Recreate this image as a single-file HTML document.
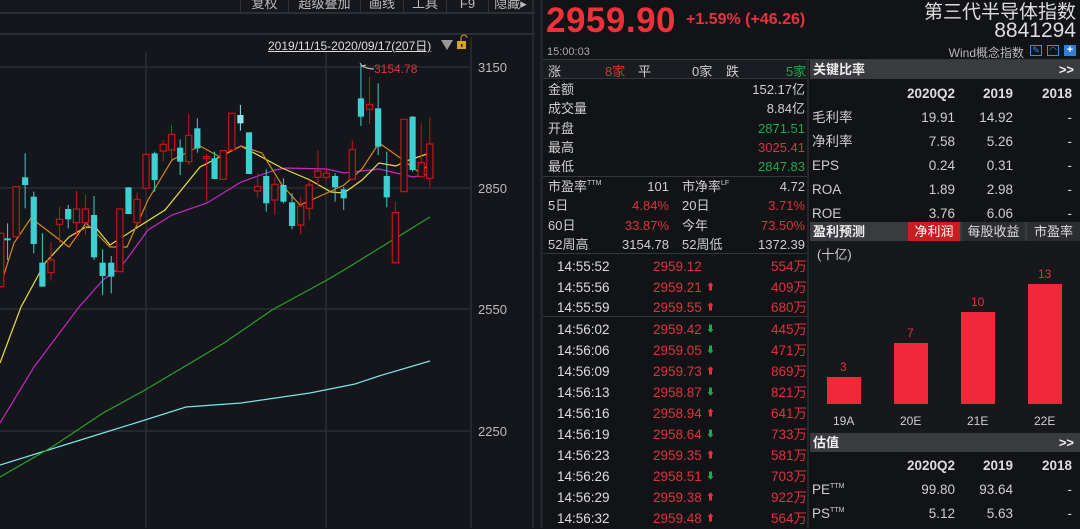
<!DOCTYPE html>
<html><head><meta charset="utf-8"><style>
*{margin:0;padding:0;box-sizing:border-box}
body{width:1080px;height:528px;background:#14161b;overflow:hidden;position:relative;font-family:"Liberation Sans","Noto Sans CJK SC",sans-serif;color:#cfcfcf;font-size:13px}
.a{position:absolute;white-space:nowrap}
.r{color:#e0323c}.g{color:#22a64c}
.R{text-align:right}
sup{line-height:0;font-size:7px;vertical-align:6px}
.hd{position:absolute;background:#3a3b3f;color:#eee;font-weight:bold;font-size:13px;height:19px;line-height:19px}
.tk{position:absolute;left:543px;width:264px;height:21px;line-height:21px;font-size:13.5px}
.tk .t{position:absolute;left:14px;color:#ddd}
.tk .p{position:absolute;left:110px;color:#e0323c}
.tk .ar{position:absolute;left:163px;font-size:9px;line-height:21px}
.tk .v{position:absolute;right:0;color:#e0323c}
.tb div{height:24px;line-height:24px}
.tb span{display:inline-block;text-align:right}
.tb span:first-child{width:60px;text-align:left}
.tb span:nth-child(2){width:83px}.tb span:nth-child(3){width:58px}.tb span:nth-child(4){width:59px}
</style></head><body>
<div class="a" style="left:0;top:0;width:535px;height:14px;background:#16181d;border-bottom:2px solid #2c2e33"></div>
<div class="a" style="left:0;top:33px;width:535px;height:2px;background:#2c2e33"></div>
<div class="a" style="top:-4px;left:240px;font-size:13px;color:#bbb;line-height:16px">
<span style="display:inline-block;width:48px;text-align:center;border-left:1px solid #333">复权</span><span style="display:inline-block;width:72px;text-align:center;border-left:1px solid #333">超级叠加</span><span style="display:inline-block;width:43px;text-align:center;border-left:1px solid #333">画线</span><span style="display:inline-block;width:43px;text-align:center;border-left:1px solid #333">工具</span><span style="display:inline-block;width:42px;text-align:center;border-left:1px solid #333">F9</span><span style="display:inline-block;width:44px;text-align:center;border-left:1px solid #333">隐藏▸</span></div>
<div class="a" style="left:268px;top:37px;font-size:12px;color:#ddd;text-decoration:underline">2019/11/15-2020/09/17(207日)</div>
<svg class="a" style="left:0;top:0" width="540" height="528">
<polygon points="441,40 453,40 447,50" fill="#999"/>
<rect x="457" y="41" width="9" height="8" fill="#d9a521"/><path d="M461,41 v-3 a3,3 0 0 1 6,0" stroke="#d9a521" fill="none"/><rect x="461" y="44" width="1.5" height="3" fill="#222"/>
<g stroke="#2b2d32" stroke-width="1.5">
<line x1="0" y1="67" x2="471" y2="67"/><line x1="0" y1="188" x2="471" y2="188"/><line x1="0" y1="309" x2="471" y2="309"/><line x1="0" y1="431" x2="471" y2="431"/>
<line x1="146" y1="52" x2="146" y2="528"/><line x1="326" y1="52" x2="326" y2="528"/>
<line x1="471" y1="37" x2="471" y2="528"/><line x1="533" y1="0" x2="533" y2="528"/>
</g>
<g fill="#bbb" font-size="13" font-family="Liberation Sans">
<text x="478" y="72">3150</text><text x="478" y="193">2850</text><text x="478" y="314">2550</text><text x="478" y="436">2250</text></g>
<g fill="none" stroke-width="1.2">
<polyline stroke="#7fe3e6" points="0,465 103,433 145,420 186,407 241,403 310,393 355,384 379,376 430,361"/>
<polyline stroke="#2aa12a" points="0,477 52,447 103,413 145,390 224,343 272,310 327,280 344,270 430,217"/>
<polyline stroke="#c628c6" points="0,423 34,367 79,307 103,280 121,267 148,230 172,215 207,203 241,182 275,170 286,168 327,169 344,173 379,169 396,173 413,177 430,174"/>
<polyline stroke="#e8e040" points="0,363 21,307 45,263 69,237 86,227 96,228 110,245 138,227 165,210 200,167 241,146 282,168 310,180 331,192 344,193 362,180 379,163 396,166 406,161 430,153"/>
<polyline stroke="#d08a20" points="0,287 14,243 31,218 69,247 86,223 110,247 127,247 148,200 172,160 200,146 220,157 241,146 262,153 282,185 300,205 327,193 344,185 362,169 379,143 399,157 420,173 430,163"/>
</g>
<g id="c" transform="translate(0,90) scale(0.3444,0.3333)"></g>
<path d="M362,66 l-2,-3 M362,66 l4,-1 M362,66 q6,3 12,3" stroke="#ccc" fill="none"/>
<text x="374" y="73" fill="#e0323c" font-size="12" font-family="Liberation Sans">3154.78</text>
</svg>
<script>
var d=[["r",2,430,590,430,590],["c",22,445,448,400,510],["r",47,290,440,288,440],["c",73,262,285,190,355],["c",98,320,462,305,490],["c",123,518,590,430,590],["r",148,510,548,458,572],["r",173,388,403,350,460],["c",198,357,388,345,415],["r",222,357,398,302,440],["r",248,357,398,315,435],["c",273,375,502,318,510],["c",298,518,558,478,615],["c",323,518,560,498,610],["r",348,357,545,357,545],["c",373,292,372,292,372],["r",398,328,398,308,405],["r",424,193,295,193,295],["c",449,190,270,185,305],["r",474,163,183,150,215],["r",498,133,180,105,210],["c",523,173,215,148,255],["r",548,136,215,72,225],["c",573,115,175,85,188],["r",600,200,205,192,335],["c",623,205,267,185,268],["r",648,182,268,180,268],["l",698,75,100,45,122],["r",673,70,180,68,180],["c",723,127,252,127,252],["r",748,290,303,250,322],["c",773,258,340,238,365],["r",798,283,330,262,375],["c",823,285,335,265,340],["c",848,337,408,310,418],["r",873,348,405,320,432],["r",898,285,355,270,390],["r",923,243,262,182,290],["r",948,250,262,240,268],["c",973,258,292,250,335],["c",998,298,325,290,360],["r",1023,178,268,152,270],["c",1048,25,80,-75,108],["r",1073,43,58,-40,102],["c",1098,55,170,-20,195],["c",1123,258,322,185,352],["r",1148,368,518,335,520],["r",1173,88,305,88,305],["c",1198,80,240,78,245],["r",1223,218,260,100,262],["r",1248,162,265,82,292]];
var s="";d.forEach(function(k){var col=k[0]=="r"?"#c01818":(k[0]=="l"?"#8ee8ea":"#3ecfd0");
s+='<line x1="'+k[1]+'" x2="'+k[1]+'" y1="'+k[4]+'" y2="'+k[5]+'" stroke="'+col+'" vector-effect="non-scaling-stroke" stroke-width="1"/>';
if(k[0]=="r")s+='<rect x="'+(k[1]-9)+'" y="'+k[2]+'" width="18" height="'+Math.max(k[3]-k[2],6)+'" fill="#14161b" stroke="'+col+'" vector-effect="non-scaling-stroke" stroke-width="1.2"/>';
else s+='<rect x="'+(k[1]-9)+'" y="'+k[2]+'" width="18" height="'+Math.max(k[3]-k[2],6)+'" fill="'+col+'"/>';});
document.getElementById("c").innerHTML=s;
</script>
<div class="a" style="left:540px;top:0;width:540px;height:528px;background:#111317;border-left:3px solid #22242a"></div>
<div class="a r" style="left:546px;top:1px;font-size:35px;font-weight:bold;color:#f0303a;letter-spacing:0.5px">2959.90</div>
<div class="a r" style="left:686px;top:11px;font-size:16px;font-weight:bold;color:#e8323c">+1.59% (+46.26)</div>
<div class="a" style="left:547px;top:46px;font-size:11px;color:#aaa">15:00:03</div>
<div class="a" style="right:4px;top:-3px;font-size:19px;color:#ddd">第三代半导体指数</div>
<div class="a" style="right:4px;top:19px;font-size:21px;color:#ddd">8841294</div>
<div class="a" style="right:56px;top:44px;font-size:12px;color:#bbb">Wind概念指数</div>
<div class="a" style="left:1030px;top:45px;width:12px;height:11px;border:1px solid #3a8ee6;color:#3a8ee6;font-size:9px;line-height:9px;text-align:center">✎</div>
<div class="a" style="left:1047px;top:45px;width:12px;height:11px;border:1px solid #3a8ee6;color:#3a8ee6;font-size:9px;line-height:9px;text-align:center">◠</div>
<div class="a" style="left:1064px;top:45px;width:12px;height:11px;background:#2f7fe0;color:#fff;font-size:11px;line-height:11px;text-align:center;font-weight:bold">+</div>
<div class="a" style="left:543px;top:59px;width:537px;height:1px;background:#34363c"></div>
<div class="a" style="left:543px;top:60px;width:264px;height:19px;background:#1a1c21;border-bottom:1px solid #34363c"></div>
<div class="a" style="left:548px;top:61px">涨</div><div class="a r" style="left:605px;top:61px">8家</div><div class="a" style="left:638px;top:61px">平</div><div class="a" style="left:692px;top:61px">0家</div><div class="a" style="left:726px;top:61px">跌</div><div class="a g" style="left:786px;top:61px">5家</div>
<div class="a" style="left:548px;top:80px;line-height:19.3px">金额<br>成交量<br>开盘<br>最高<br>最低</div>
<div class="a R" style="right:275px;top:80px;line-height:19.3px">152.17亿<br>8.84亿<br><span class="g">2871.51</span><br><span class="r">3025.41</span><br><span class="g">2847.83</span></div>
<div class="a" style="left:543px;top:176px;width:264px;height:1px;background:#34363c"></div>
<div class="a" style="left:548px;top:177px;line-height:19.3px">市盈率<sup>TTM</sup><br>5日<br>60日<br>52周高</div>
<div class="a R" style="right:411px;top:177px;line-height:19.3px">101<br><span class="r">4.84%</span><br><span class="r">33.87%</span><br>3154.78</div>
<div class="a" style="left:682px;top:177px;line-height:19.3px">市净率<sup>LF</sup><br>20日<br>今年<br>52周低</div>
<div class="a R" style="right:275px;top:177px;line-height:19.3px">4.72<br><span class="r">3.71%</span><br><span class="r">73.50%</span><br>1372.39</div>
<div class="a" style="left:543px;top:253px;width:264px;height:1px;background:#34363c"></div>
<div class="a" style="left:543px;top:316px;width:264px;height:1px;background:#34363c"></div>
<div id="ticks"></div>
<script>
var t=[["14:55:52","2959.12","","554万",256],["14:55:56","2959.21","u","409万",277],["14:55:59","2959.55","u","680万",297],
["14:56:02","2959.42","d","445万",319],["14:56:06","2959.05","d","471万",340],["14:56:09","2959.73","u","869万",361],["14:56:13","2958.87","d","821万",382],["14:56:16","2958.94","u","641万",403],["14:56:19","2958.64","d","733万",424],["14:56:23","2959.35","u","581万",445],["14:56:26","2958.51","d","703万",466],["14:56:29","2959.38","u","922万",487],["14:56:32","2959.48","u","564万",508]];
var h="";t.forEach(function(r){h+='<div class="tk" style="top:'+r[4]+'px"><span class="t">'+r[0]+'</span><span class="p">'+r[1]+'</span>'+(r[2]?'<span class="ar" style="color:'+(r[2]=="u"?"#e0323c":"#22a64c")+'">'+(r[2]=="u"?"⬆":"⬇")+'</span>':'')+'<span class="v">'+r[3]+'</span></div>';});
document.getElementById("ticks").innerHTML=h;
</script>
<div class="a" style="left:807px;top:60px;width:2px;height:468px;background:#25272c"></div>
<div class="hd" style="left:810px;top:60px;width:270px;padding-left:3px">关键比率<span style="float:right;margin-right:6px">&gt;&gt;</span></div>
<div class="a tb" style="left:812px;top:82px;width:264px;font-size:13.5px">
<div style="font-weight:bold;color:#ddd"><span></span><span>2020Q2</span><span>2019</span><span>2018</span></div>
<div><span>毛利率</span><span>19.91</span><span>14.92</span><span>-</span></div>
<div><span>净利率</span><span>7.58</span><span>5.26</span><span>-</span></div>
<div><span>EPS</span><span>0.24</span><span>0.31</span><span>-</span></div>
<div><span>ROA</span><span>1.89</span><span>2.98</span><span>-</span></div>
<div><span>ROE</span><span>3.76</span><span>6.06</span><span>-</span></div>
</div>
<div class="hd" style="left:810px;top:222px;width:270px;padding-left:3px">盈利预测</div>
<div class="a" style="left:908px;top:222px;width:52px;height:19px;background:#c81e22;color:#fff;text-align:center;line-height:19px">净利润</div>
<div class="a" style="left:962px;top:222px;width:63px;height:19px;background:#2c2d31;color:#ddd;text-align:center;line-height:19px">每股收益</div>
<div class="a" style="left:1027px;top:222px;width:53px;height:19px;background:#2c2d31;color:#ddd;text-align:center;line-height:19px">市盈率</div>
<div class="a" style="left:810px;top:241px;width:270px;height:192px;background:#16181c"></div>
<div class="a" style="left:817px;top:244px;color:#ccc">(十亿)</div>
<div class="a" style="left:827px;top:377px;width:34px;height:27px;background:#f0283a"></div>
<div class="a" style="left:894px;top:343px;width:34px;height:61px;background:#f0283a"></div>
<div class="a" style="left:961px;top:312px;width:34px;height:92px;background:#f0283a"></div>
<div class="a" style="left:1028px;top:284px;width:34px;height:120px;background:#f0283a"></div>
<div class="a r" style="left:840px;top:360px;font-size:12px">3</div>
<div class="a r" style="left:907px;top:326px;font-size:12px">7</div>
<div class="a r" style="left:971px;top:295px;font-size:12px">10</div>
<div class="a r" style="left:1038px;top:267px;font-size:12px">13</div>
<div class="a" style="left:833px;top:414px;font-size:12px">19A</div>
<div class="a" style="left:900px;top:414px;font-size:12px">20E</div>
<div class="a" style="left:967px;top:414px;font-size:12px">21E</div>
<div class="a" style="left:1034px;top:414px;font-size:12px">22E</div>
<div class="hd" style="left:810px;top:433px;width:270px;padding-left:3px">估值<span style="float:right;margin-right:6px">&gt;&gt;</span></div>
<div class="a tb" style="left:812px;top:454px;width:264px;font-size:13.5px">
<div style="font-weight:bold;color:#ddd"><span></span><span>2020Q2</span><span>2019</span><span>2018</span></div>
<div><span>PE<sup>TTM</sup></span><span>99.80</span><span>93.64</span><span>-</span></div>
<div><span>PS<sup>TTM</sup></span><span>5.12</span><span>5.63</span><span>-</span></div>
</div>
</body></html>
